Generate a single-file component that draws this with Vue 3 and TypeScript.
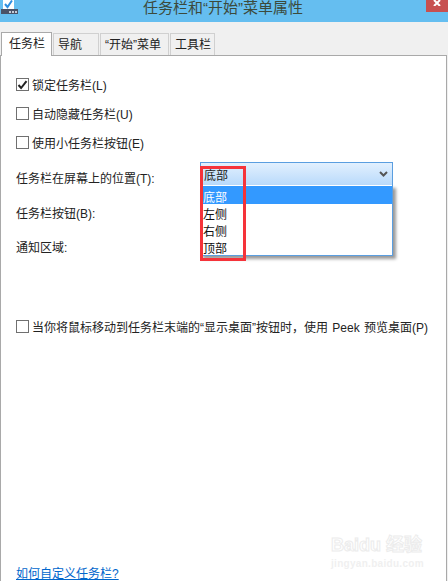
<script setup lang="ts">
interface Option {
  label: string
  checked: boolean
}

const tabs = ['任务栏', '导航', '“开始”菜单', '工具栏']
const topOptions: Option[] = [
  { label: '锁定任务栏(L)', checked: true },
  { label: '自动隐藏任务栏(U)', checked: false },
  { label: '使用小任务栏按钮(E)', checked: false },
]
const positions = ['底部', '左侧', '右侧', '顶部']
</script>

<template>
  <div class="dialog">
    <header class="titlebar">
      <svg class="app-icon" width="17" height="15" viewBox="0 0 17 15">
        <rect x="2" y="0" width="11" height="9" fill="#fff" />
        <path d="M4 4l2.5 3L11 0.5" fill="none" stroke="#2f8fe0" stroke-width="2" />
        <rect x="0" y="9" width="17" height="5" fill="#4a5368" />
        <rect x="8" y="11" width="2" height="2" fill="#c5ccd8" />
        <rect x="11" y="11" width="2" height="2" fill="#c5ccd8" />
        <rect x="14" y="11" width="2" height="2" fill="#c5ccd8" />
      </svg>
      <h1 class="title">任务栏和“开始”菜单属性</h1>
      <button class="close" type="button">
        <svg width="8" height="6" viewBox="0 0 8 6"><path d="M1 0l6 6M7 0L1 6" stroke="#fff" stroke-width="2" /></svg>
      </button>
    </header>

    <nav class="tabs">
      <div
        v-for="(tab, i) in tabs"
        :key="tab"
        class="tab"
        :class="[`tab--${i}`, { 'tab--active': i === 0 }]"
      >{{ tab }}</div>
    </nav>

    <main class="panel">
      <div class="checks">
        <label v-for="opt in topOptions" :key="opt.label" class="check">
          <span class="box">
            <svg v-if="opt.checked" width="11" height="10" viewBox="0 0 11 10"><path d="M1.5 5l2.6 3L9.5 1.2" fill="none" stroke="#222" stroke-width="2" /></svg>
          </span>
          {{ opt.label }}
        </label>
      </div>

      <div class="field field--first">
        <span>任务栏在屏幕上的位置(T):</span>
        <div class="select">
          <span class="select__value">底部</span>
          <svg width="9" height="6" viewBox="0 0 9 6"><path d="M1 1l3.5 3.5L8 1" fill="none" stroke="#555" stroke-width="2" /></svg>
        </div>
        <ul class="menu">
          <li v-for="(pos, i) in positions" :key="pos" :class="{ selected: i === 0 }">{{ pos }}</li>
        </ul>
        <div class="annotation"></div>
      </div>
      <div class="field field--second">任务栏按钮(B):</div>
      <div class="field field--third">通知区域:</div>

      <label class="check check--peek">
        <span class="box"></span>
        当你将鼠标移动到任务栏末端的“显示桌面”按钮时，使用 Peek 预览桌面(P)
      </label>

      <a class="help" href="#">如何自定义任务栏?</a>

      <div class="watermark">
        <div class="watermark__logo">Bai<span>du</span> 经验</div>
        <div class="watermark__url">jingyan.baidu.com</div>
      </div>
    </main>
  </div>
</template>

<style>
html, body {
  margin: 0;
  background: #fff;
}
</style>

<style scoped>
.dialog {
  display: flex;
  flex-direction: column;
  width: 448px;
  height: 581px;
  overflow: hidden;
  font-family: "Liberation Sans", "Noto Sans CJK SC", sans-serif;
  font-size: 12px;
  color: #222;
  background: #f0f0f0;
}

.titlebar {
  position: relative;
  flex: none;
  height: 22px;
  background: #65bef0;
}

.app-icon {
  position: absolute;
  left: 1px;
  top: 0;
}

.title {
  margin: 0;
  padding-left: 143px;
  font-size: 15px;
  font-weight: 400;
  line-height: 15px;
  color: #3c4a3c;
}

.close {
  position: absolute;
  top: 0;
  right: 0;
  display: flex;
  align-items: flex-start;
  justify-content: center;
  width: 22px;
  height: 12px;
  padding: 0;
  border: none;
  background: #c75050;
}

.tabs {
  flex: none;
  display: flex;
  align-items: flex-end;
  height: 33px;
  padding-left: 1px;
}

.tab {
  box-sizing: border-box;
  height: 22px;
  margin-right: 1px;
  padding-left: 4px;
  border: 1px solid #d0d0d0;
  border-bottom: none;
  line-height: 23px;
  font-size: 12px;
  background: #f0f0f0;
}

.tab--0 { width: 51px; }
.tab--1 { width: 46px; }
.tab--2 { width: 69px; }
.tab--3 { width: 45px; }

.tab--active {
  position: relative;
  z-index: 1;
  height: 24px;
  margin-bottom: -1px;
  padding-left: 7px;
  border-color: #a9a9a9;
  background: #fff;
}

.panel {
  position: relative;
  flex: 1;
  box-sizing: border-box;
  margin-right: 1px;
  padding: 20px 0 0 15px;
  border: 1px solid #a9a9a9;
  border-bottom: none;
  background: #fff;
}

.checks {
  display: flex;
  flex-direction: column;
  gap: 12px;
}

.check {
  display: flex;
  align-items: center;
  gap: 3px;
  height: 17px;
  white-space: nowrap;
}

.box {
  flex: none;
  display: flex;
  align-items: center;
  justify-content: center;
  box-sizing: border-box;
  width: 13px;
  height: 13px;
  border: 1px solid #707070;
  background: #fff;
}

.field {
  position: relative;
  height: 17px;
  line-height: 17px;
}

.field--first { margin-top: 20px; }
.field--second { margin-top: 18px; }
.field--third { margin-top: 17px; }

.select {
  position: absolute;
  left: 184px;
  top: -9px;
  display: flex;
  align-items: center;
  justify-content: space-between;
  box-sizing: border-box;
  width: 193px;
  height: 24px;
  padding: 0 4px 0 3px;
  border: 1px solid #5a9ee0;
  background: linear-gradient(#e2f0fe, #b9dafb);
}

.select__value {
  padding-top: 5px;
  line-height: 15px;
}

.menu {
  position: absolute;
  left: 184px;
  top: 14px;
  z-index: 2;
  box-sizing: border-box;
  width: 193px;
  height: 71px;
  margin: 0;
  padding: 1px 0 0;
  list-style: none;
  border: 1px solid #5a9ee0;
  border-top: none;
  background: #fff;
  box-shadow: 3px 3px 3px rgba(0, 0, 0, 0.4);
}

.menu li {
  box-sizing: border-box;
  height: 17px;
  padding: 4px 0 0 2px;
  line-height: 15px;
  font-size: 12px;
  color: #111;
}

.menu li.selected {
  height: 18px;
  line-height: 16px;
  color: #fff;
  background: #3399ff;
}

.annotation {
  position: absolute;
  left: 184px;
  top: -5px;
  z-index: 3;
  box-sizing: border-box;
  width: 46px;
  height: 95px;
  border: 3px solid #f5333a;
}

.check--peek {
  margin-top: 61px;
  word-spacing: 1px;
}

.help {
  position: absolute;
  left: 15px;
  bottom: -1px;
  line-height: 15px;
  color: #0066cc;
  text-decoration: underline;
}

.watermark {
  position: absolute;
  left: 330px;
  bottom: 12px;
  width: 88px;
  text-align: center;
  color: #fff;
  font-family: "Liberation Sans", "Noto Sans CJK SC", sans-serif;
  white-space: nowrap;
}

.watermark__logo {
  font-size: 18px;
  font-weight: 700;
  line-height: 18px;
  -webkit-text-stroke: 1px #ececec;
}

.watermark__url {
  margin-top: 5px;
  font-size: 10px;
  font-weight: 700;
  line-height: 10px;
  letter-spacing: 0.3px;
  color: #f0f0f0;
}
</style>
